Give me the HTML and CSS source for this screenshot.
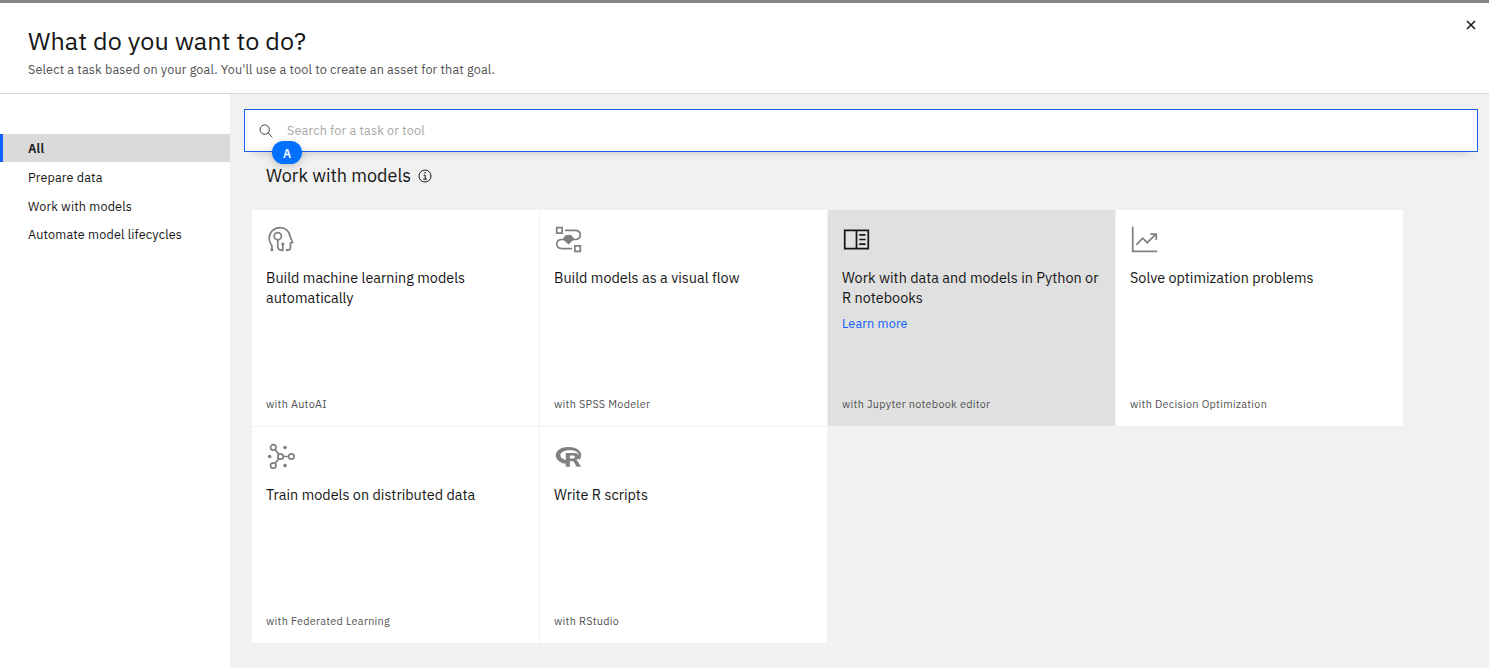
FILE: index.html
```html
<!DOCTYPE html>
<html lang="en">
<head>
<meta charset="utf-8">
<title>What do you want to do?</title>
<link rel="stylesheet" href="styles.css">
</head>
<body>
<div class="modal">
  <header class="header">
    <div>
      <h1 class="title"><span>What do you want to do?</span></h1>
      <p class="subtitle"><span>Select a task based on your goal. You'll use a tool to create an asset for that goal.</span></p>
    </div>
    <button class="close" aria-label="Close"><svg viewBox="0 0 10 10"><path d="M1 1l8 8M9 1L1 9"/></svg></button>
  </header>
  <div class="body">
    <nav class="nav">
      <a class="nav-item active"><span>All</span></a>
      <a class="nav-item"><span>Prepare data</span></a>
      <a class="nav-item"><span>Work with models</span></a>
      <a class="nav-item"><span>Automate model lifecycles</span></a>
    </nav>
    <main class="main">
      <div class="search">
        <svg class="search-icon" viewBox="0 0 14 14"><circle cx="5.7" cy="5.6" r="4.7"/><path d="M9 9l4.3 4.2"/></svg>
        <span class="placeholder">Search for a task or tool</span>
        <b class="marker">A</b>
      </div>
      <h2 class="section"><span>Work with models</span>
        <svg class="info" viewBox="0 0 14 14"><circle cx="7" cy="7" r="6"/><path d="M5.5 6.1h1.7v4M5.2 10.1h3.8"/><circle class="dot" cx="7" cy="3.8" r=".8"/></svg>
      </h2>
      <div class="cards">
        <article class="card">
          <svg class="icon" viewBox="0 0 32 32"><path d="M6.500 28v-5.200C4.500 20 3.500 18 3.500 14.500 3.500 8 9 3 15.500 3s10.700 4.500 11 9.500L29.300 19 27 20v5q0 2.500-2.500 2.500H23V29M13 16.500v7.500q0 4 5.500 4v-6.500"/><circle cx="13" cy="12.300" r="4"/><g class="solid"><circle cx="6.500" cy="27.300" r="1.700"/><circle cx="18.500" cy="21" r="1.800"/></g></svg>
          <h3 class="name"><span>Build machine learning models</span><br><span>automatically</span></h3>
          <p class="tool"><span>with AutoAI</span></p>
        </article>
        <article class="card">
          <svg class="icon" viewBox="0 0 32 32"><path d="M3 3h6v6H3zM23 23h6v6h-6zM12 6h11q6 0 6 5t-6 5h-2M11 16H9q-6 0-6 5t6 5h11"/><path class="solid" d="M13 11h6l3.500 4.500L16 21.500 9.500 15.500z"/></svg>
          <h3 class="name"><span>Build models as a visual flow</span></h3>
          <p class="tool"><span>with SPSS Modeler</span></p>
        </article>
        <article class="card selected">
          <svg class="icon" viewBox="0 0 32 32"><path d="M3 6h26v20H3zM16 6v20M19 11h7M19 16h7M19 21h7"/></svg>
          <h3 class="name"><span>Work with data and models in Python or</span><br><span>R notebooks</span></h3>
          <a class="learn"><span>Learn more</span></a>
          <p class="tool"><span>with Jupyter notebook editor</span></p>
        </article>
        <article class="card">
          <svg class="icon" viewBox="0 0 32 32"><path d="M3 2v27h27M7 22l7-7.500 5 5L28.500 10M22.500 10H29v6.500"/></svg>
          <h3 class="name"><span>Solve optimization problems</span></h3>
          <p class="tool"><span>with Decision Optimization</span></p>
        </article>
        <article class="card">
          <svg class="icon" viewBox="0 0 32 32"><circle cx="8" cy="6" r="3"/><circle cx="8" cy="26" r="3"/><circle cx="16" cy="16" r="3"/><circle cx="28" cy="16" r="3"/><path d="M9.900 8.400l4.300 5.200M9.900 23.600l4.300-5.200M19 16h6"/><g class="solid"><circle cx="4" cy="16" r="2"/><circle cx="21" cy="6" r="2"/><circle cx="21" cy="26" r="2"/></g></svg>
          <h3 class="name"><span>Train models on distributed data</span></h3>
          <p class="tool"><span>with Federated Learning</span></p>
        </article>
        <article class="card">
          <svg class="icon" viewBox="0 0 32 32"><path class="solid" d="M16 5.500C8 5.500 2 9.400 2 14.500s5 8.900 11.500 9.500v-3.900C9.500 19.200 7 17.200 7 14.700 7 11.200 11.500 9 17.500 9s9.700 2 9.700 5.500c0 1.300-.4 2.200-1 3L28 19.500q2-2.200 2-5C30 9.200 24 5.500 16 5.500z"/><path class="solid" fill-rule="evenodd" d="M13 12h9.500q5 0 5 4 0 3-3 3.800 1.300.5 2 2L29.800 27.200h-4.900l-2.600-4.700q-.7-1.300-2-1.300h-2.800v6H13zM17.500 15v3.200h3.700q1.900 0 1.900-1.600T21.200 15z"/></svg>
          <h3 class="name"><span>Write R scripts</span></h3>
          <p class="tool"><span>with RStudio</span></p>
        </article>
      </div>
    </main>
  </div>
</div>
</body>
</html>
```

FILE: styles.css
```css
* { box-sizing: border-box; }
body, h1, h2, h3, p { margin: 0; font-weight: 400; }
body {
  height: 668px;
  overflow: hidden;
  font-family: "IBM Plex Sans", Roboto, sans-serif;
  color: #161616;
  background: #fff;
}
svg { display: block; fill: none; stroke: currentColor; }
.modal { height: 668px; display: flex; flex-direction: column; border-top: 3px solid #868686; }
.header {
  height: 91px;
  display: flex;
  justify-content: space-between;
  padding: 22px 13px 0 28px;
  border-bottom: 1px solid #d9d9d9;
}
.title { font-size: 25.2px; line-height: 32px; letter-spacing: .02px; }
.subtitle { margin-top: 3px; font-size: 12.6px; line-height: 18px; letter-spacing: .15px; color: #525252; }
.close { width: 10px; height: 10px; margin-top: -5px; padding: 0; border: 0; background: none; color: #161616; }
.close svg { width: 10px; height: 10px; stroke-width: 1.5; }
.body { flex: 1; display: flex; }
.nav { width: 230px; padding-top: 40px; }
.nav-item {
  display: block;
  height: 28px;
  margin-bottom: .8px;
  padding-left: 28px;
  font-size: 12.6px;
  line-height: 29px;
  letter-spacing: .16px;
}
.nav-item.active { padding-left: 25px; border-left: 3px solid #0f62fe; background: #dadada; font-weight: 600; }
.main { flex: 1; padding: 15px 11px 0 14px; background: #f1f1f1; }
.search {
  position: relative;
  height: 43px;
  display: flex;
  align-items: center;
  gap: 14px;
  padding-left: 14px;
  border: 1px solid #1860e4;
  background: #fff;
  box-shadow: 0 8px 12px -10px rgba(0, 0, 0, .3);
}
.search-icon { width: 14px; height: 14px; color: #444; }
.placeholder { padding-bottom: 2px; font-size: 12.6px; letter-spacing: .16px; color: #a8a8a8; }
.marker {
  position: absolute;
  left: 27px;
  top: 31px;
  width: 30px;
  height: 23px;
  border-radius: 12px;
  background: #0070ff;
  color: #fff;
  font-size: 12px;
  font-weight: 600;
  line-height: 25px;
  text-align: center;
  box-shadow: 0 2px 8px rgba(0, 0, 0, .2);
}
.section {
  display: flex;
  align-items: center;
  gap: 7px;
  height: 24px;
  margin: 12px 0 22px 22px;
  font-size: 18px;
}
.section span { padding-bottom: 2px; }
.info { width: 14px; height: 14px; }
.info .dot { fill: currentColor; stroke: none; }
.cards {
  display: grid;
  grid-template-columns: repeat(4, 287px);
  grid-auto-rows: 216px;
  gap: 1px;
  margin-left: 8px;
}
.card { display: flex; flex-direction: column; padding: 15px 14px 14px; background: #fff; }
.selected { background: #e0e0e0; }
.icon { width: 29px; height: 29px; stroke-width: 1.9; color: #808080; }
.selected .icon { color: #161616; }
.icon .solid { fill: currentColor; stroke: none; }
.name { margin-top: 14px; font-size: 14.4px; line-height: 20px; white-space: nowrap; }
.learn { margin-top: 6px; font-size: 12.6px; line-height: 18px; letter-spacing: .16px; color: #0f62fe; }
.tool { margin-top: auto; font-size: 10.8px; line-height: 15px; letter-spacing: .3px; color: #525252; }
```
